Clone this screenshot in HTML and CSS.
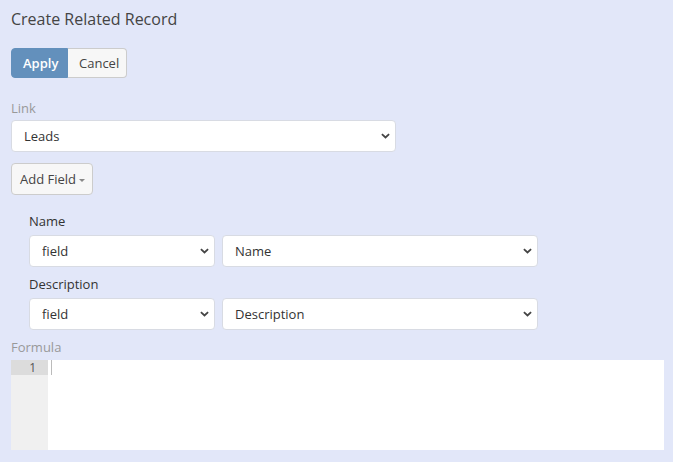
FILE: index.html
```html
<!DOCTYPE html>
<html lang="en">
<head>
    <meta charset="UTF-8">
    <meta name="viewport" content="width=device-width, initial-scale=1.0">
    <title>Create Related Record</title>
    <link rel="stylesheet" href="styles.css">
</head>
<body>
    <div class="panel">
        <h1 class="panel-title">Create Related Record</h1>

        <div class="btn-group">
            <button class="btn btn-primary">Apply</button>
            <button class="btn btn-default">Cancel</button>
        </div>

        <div class="cell link-cell">
            <label class="control-label">Link</label>
            <div class="select-wrap link-select">
                <select class="form-control">
                    <option>Leads</option>
                </select>
                <svg class="chevron" viewBox="0 0 10 6" width="9" height="6"><path d="M1 1 L5 4.6 L9 1" fill="none" stroke="#444" stroke-width="2"/></svg>
            </div>
        </div>

        <button class="btn btn-default add-field">Add Field <span class="caret"></span></button>

        <div class="field-list">
            <div class="field-row">
                <label class="field-label">Name</label>
                <div class="field-controls">
                    <div class="select-wrap type-select">
                        <select class="form-control"><option>field</option></select>
                        <svg class="chevron" viewBox="0 0 10 6" width="9" height="6"><path d="M1 1 L5 4.6 L9 1" fill="none" stroke="#444" stroke-width="2"/></svg>
                    </div>
                    <div class="select-wrap value-select">
                        <select class="form-control"><option>Name</option></select>
                        <svg class="chevron" viewBox="0 0 10 6" width="9" height="6"><path d="M1 1 L5 4.6 L9 1" fill="none" stroke="#444" stroke-width="2"/></svg>
                    </div>
                </div>
            </div>
            <div class="field-row">
                <label class="field-label">Description</label>
                <div class="field-controls">
                    <div class="select-wrap type-select">
                        <select class="form-control"><option>field</option></select>
                        <svg class="chevron" viewBox="0 0 10 6" width="9" height="6"><path d="M1 1 L5 4.6 L9 1" fill="none" stroke="#444" stroke-width="2"/></svg>
                    </div>
                    <div class="select-wrap value-select">
                        <select class="form-control"><option>Description</option></select>
                        <svg class="chevron" viewBox="0 0 10 6" width="9" height="6"><path d="M1 1 L5 4.6 L9 1" fill="none" stroke="#444" stroke-width="2"/></svg>
                    </div>
                </div>
            </div>
        </div>

        <div class="cell formula-cell">
            <label class="control-label">Formula</label>
            <div class="code-editor">
                <div class="gutter">
                    <div class="line-number active">1</div>
                </div>
                <div class="code-area">
                    <span class="cursor"></span>
                </div>
            </div>
        </div>
    </div>
</body>
</html>
```

FILE: styles.css
```css
body {
    margin: 0;
    background-color: #e2e7f9;
    font-family: "Open Sans", Arial, sans-serif;
    font-size: 13px;
    color: #333;
}
.panel {
    padding: 9px 9px 0 11px;
}
.panel-title {
    margin: 0;
    font-size: 16px;
    line-height: 20px;
    font-weight: normal;
    color: #444;
}
.btn-group {
    display: flex;
    margin-top: 19px;
}
.btn {
    font-family: inherit;
    font-size: 13px;
    height: 30px;
    padding: 0 11px;
    border: 1px solid #ccc;
    border-radius: 4px;
    white-space: nowrap;
    cursor: pointer;
}
.btn-primary {
    background-color: #6390bc;
    border-color: #6390bc;
    color: #fff;
    font-weight: 600;
    border-top-right-radius: 0;
    border-bottom-right-radius: 0;
    width: 57px;
}
.btn-default {
    background-color: #f7f7f7;
    color: #444;
}
.btn-group .btn-default {
    border-left: none;
    border-top-left-radius: 0;
    border-bottom-left-radius: 0;
    width: 59px;
}
.link-cell {
    margin-top: 21px;
}
.control-label {
    display: block;
    color: #999;
    line-height: 18px;
    margin-bottom: 3px;
}
.select-wrap {
    position: relative;
}
.form-control {
    display: block;
    width: 100%;
    height: 32px;
    padding: 0 12px;
    font-family: inherit;
    font-size: 13px;
    color: #333;
    background-color: #fff;
    border: 1px solid #d8dbe3;
    border-radius: 4px;
    -webkit-appearance: none;
    appearance: none;
    box-sizing: border-box;
}
.chevron {
    position: absolute;
    right: 6px;
    top: 13px;
    pointer-events: none;
}
.link-select {
    width: 385px;
}
.add-field {
    display: block;
    margin-top: 11px;
    height: 32px;
    padding: 0 7px 0 8px;
}
.caret {
    display: inline-block;
    width: 0;
    height: 0;
    margin-left: 0;
    vertical-align: middle;
    border-top: 3px solid #888;
    border-left: 3px solid transparent;
    border-right: 3px solid transparent;
}
.field-list {
    padding-left: 18px;
    margin-top: 17px;
}
.field-row + .field-row {
    margin-top: 8px;
}
.field-label {
    display: block;
    line-height: 18px;
    margin-bottom: 5px;
}
.field-controls {
    display: flex;
    gap: 7px;
}
.type-select {
    width: 186px;
}
.value-select {
    width: 316px;
}
.formula-cell {
    margin-top: 8px;
}
.formula-cell .control-label {
    margin-bottom: 4px;
}
.code-editor {
    display: flex;
    height: 90px;
    width: 653px;
    background-color: #fff;
}
.gutter {
    width: 37px;
    background-color: #f0f0f0;
}
.line-number {
    height: 15px;
    line-height: 15px;
    text-align: right;
    padding-right: 12px;
    font-size: 12px;
    color: #555;
}
.line-number.active {
    background-color: #dcdcdc;
}
.code-area {
    flex: 1;
    padding-left: 3px;
}
.cursor {
    display: block;
    width: 1px;
    height: 15px;
    background-color: #bbb;
}
```
